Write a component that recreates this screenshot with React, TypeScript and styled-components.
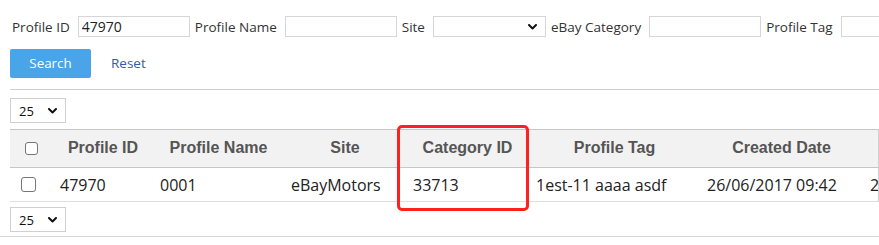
import styled, { createGlobalStyle } from 'styled-components';

const GlobalStyle = createGlobalStyle`
    html, body {
        margin: 0;
        padding: 0;
        background: #fff;
        overflow: hidden;
    }
    body {
        font-family: 'Open Sans', 'Liberation Sans', sans-serif;
        color: #333;
    }
`;

// column widths of the profile grid, left to right
const COLUMNS = '40px 100px 131px 122px 123px 171px 163px 150px';

const headers = [
    'Profile ID',
    'Profile Name',
    'Site',
    'Category ID',
    'Profile Tag',
    'Created Date',
    'Updated Date',
];

const rows = [
    [
        '47970',
        '0001',
        'eBayMotors',
        '33713',
        '1est-11 aaaa asdf',
        '26/06/2017 09:42',
        '26/06/2017 09:42',
    ],
];

function Chevron() {
    return (
        <svg width='9' height='6' viewBox='0 0 9 6'>
            <path
                d='M1 1 L4.5 4.5 L8 1'
                fill='none'
                stroke='#111'
                strokeWidth='2'
                strokeLinecap='round'
                strokeLinejoin='round'
            />
        </svg>
    );
}

export default function App() {
    return (
        <>
            <GlobalStyle />
            <Page>
                <Filters>
                    <Label>Profile ID</Label>
                    <Input defaultValue='47970' />
                    <Label>Profile Name</Label>
                    <Input />
                    <Label>Site</Label>
                    <SelectBox $width={113}>
                        <span />
                        <Chevron />
                    </SelectBox>
                    <Label>eBay Category</Label>
                    <Input />
                    <Label>Profile Tag</Label>
                    <Input />
                </Filters>
                <Actions>
                    <SearchButton>Search</SearchButton>
                    <ResetLink>Reset</ResetLink>
                </Actions>
                <Divider />
                <PageSize>
                    <span>25</span>
                    <Chevron />
                </PageSize>
                <TableWrap>
                    <HeaderRow>
                        <CheckCell>
                            <Checkbox $size={13} $offset={15} />
                        </CheckCell>
                        {headers.map((h) => (
                            <HeadCell key={h}>{h}</HeadCell>
                        ))}
                    </HeaderRow>
                    {rows.map((r, i) => (
                        <DataRow key={i}>
                            <CheckCell>
                                <Checkbox $size={15} $offset={11} />
                            </CheckCell>
                            {r.map((v, j) => (
                                <DataCell key={j}>{v}</DataCell>
                            ))}
                        </DataRow>
                    ))}
                    <Highlight />
                </TableWrap>
                <PageSize $bottom>
                    <span>25</span>
                    <Chevron />
                </PageSize>
            </Page>
            <FullDivider />
        </>
    );
}

const Page = styled.div`
    padding: 16px 0 0 10px;
`;

const Filters = styled.div`
    display: flex;
    align-items: center;
    height: 21px;
    padding-left: 2px;
    white-space: nowrap;
`;

const Label = styled.label`
    font-size: 13.5px;
    color: #333;
    margin-right: 8px;
`;

const Input = styled.input`
    box-sizing: border-box;
    flex: none;
    width: 112px;
    height: 21px;
    margin: 0 5px 0 0;
    padding: 0 3px;
    border: 1px solid #d6d6d6;
    font-family: 'Open Sans', sans-serif;
    font-size: 14px;
    color: #222;
    outline: none;
`;

const SelectBox = styled.div<{ $width: number }>`
    box-sizing: border-box;
    flex: none;
    width: ${(p) => p.$width}px;
    height: 21px;
    margin-right: 5px;
    padding: 0 8px 0 6px;
    border: 1px solid #d6d6d6;
    display: flex;
    align-items: center;
    justify-content: space-between;
`;

const Actions = styled.div`
    display: flex;
    align-items: center;
    margin-top: 12px;
    height: 29px;
`;

const SearchButton = styled.button`
    width: 81px;
    height: 29px;
    border: none;
    border-radius: 2px;
    background: #4aa5e8;
    color: #fff;
    font-family: 'Open Sans', sans-serif;
    font-size: 13.4px;
    padding: 0 0 2px;
`;

const ResetLink = styled.a`
    margin-left: 20px;
    font-size: 13.5px;
    color: #3858a8;
    cursor: pointer;
    margin-top: -2px;
`;

const Divider = styled.div`
    margin-top: 11px;
    height: 1px;
    background: #cfcfcf;
`;

const PageSize = styled.div<{ $bottom?: boolean }>`
    box-sizing: border-box;
    width: 56px;
    height: 25px;
    margin-top: ${(p) => (p.$bottom ? 5 : 8)}px;
    padding: 0 8px 0 8px;
    border: 1px solid #d0d0d0;
    display: flex;
    align-items: center;
    justify-content: space-between;
    font-size: 13px;
    color: #111;
`;

const TableWrap = styled.div`
    position: relative;
    margin-top: 6px;
    width: 868px;
    border-right: 1px solid #d0d0d0;
`;

const HeaderRow = styled.div`
    display: grid;
    grid-template-columns: ${COLUMNS};
    height: 37px;
    background: #f2f2f2;
    border-top: 1px solid #c6c6c6;
    border-bottom: 1px solid #c6c6c6;
    overflow: hidden;
`;

const DataRow = styled.div`
    display: grid;
    grid-template-columns: ${COLUMNS};
    height: 33px;
    border-bottom: 1px solid #dedede;
    overflow: hidden;
`;

const CheckCell = styled.div`
    display: flex;
    align-items: center;
`;

const Checkbox = styled.span<{ $size: number; $offset: number }>`
    box-sizing: border-box;
    width: ${(p) => p.$size}px;
    height: ${(p) => p.$size}px;
    margin-left: ${(p) => p.$offset}px;
    border: 1px solid #767676;
    border-radius: 3px;
    background: #fff;
`;

const HeadCell = styled.div`
    display: flex;
    align-items: center;
    justify-content: center;
    padding: 0 4px 1px 10px;
    white-space: nowrap;
    font-family: 'Liberation Sans', Arial, sans-serif;
    font-weight: bold;
    font-size: 16px;
    color: #555;
`;

const DataCell = styled.div`
    display: flex;
    align-items: center;
    padding: 0 4px 0 10px;
    white-space: nowrap;
    font-size: 16px;
    color: #222;
`;

// red annotation drawn over the Category ID column
const Highlight = styled.div`
    position: absolute;
    left: 387px;
    top: -4px;
    width: 132px;
    height: 86px;
    box-sizing: border-box;
    border: 3px solid #ff2020;
    border-radius: 5px;
    pointer-events: none;
`;

const FullDivider = styled.div`
    margin-top: 4px;
    height: 1px;
    background: #d6d6d6;
`;
